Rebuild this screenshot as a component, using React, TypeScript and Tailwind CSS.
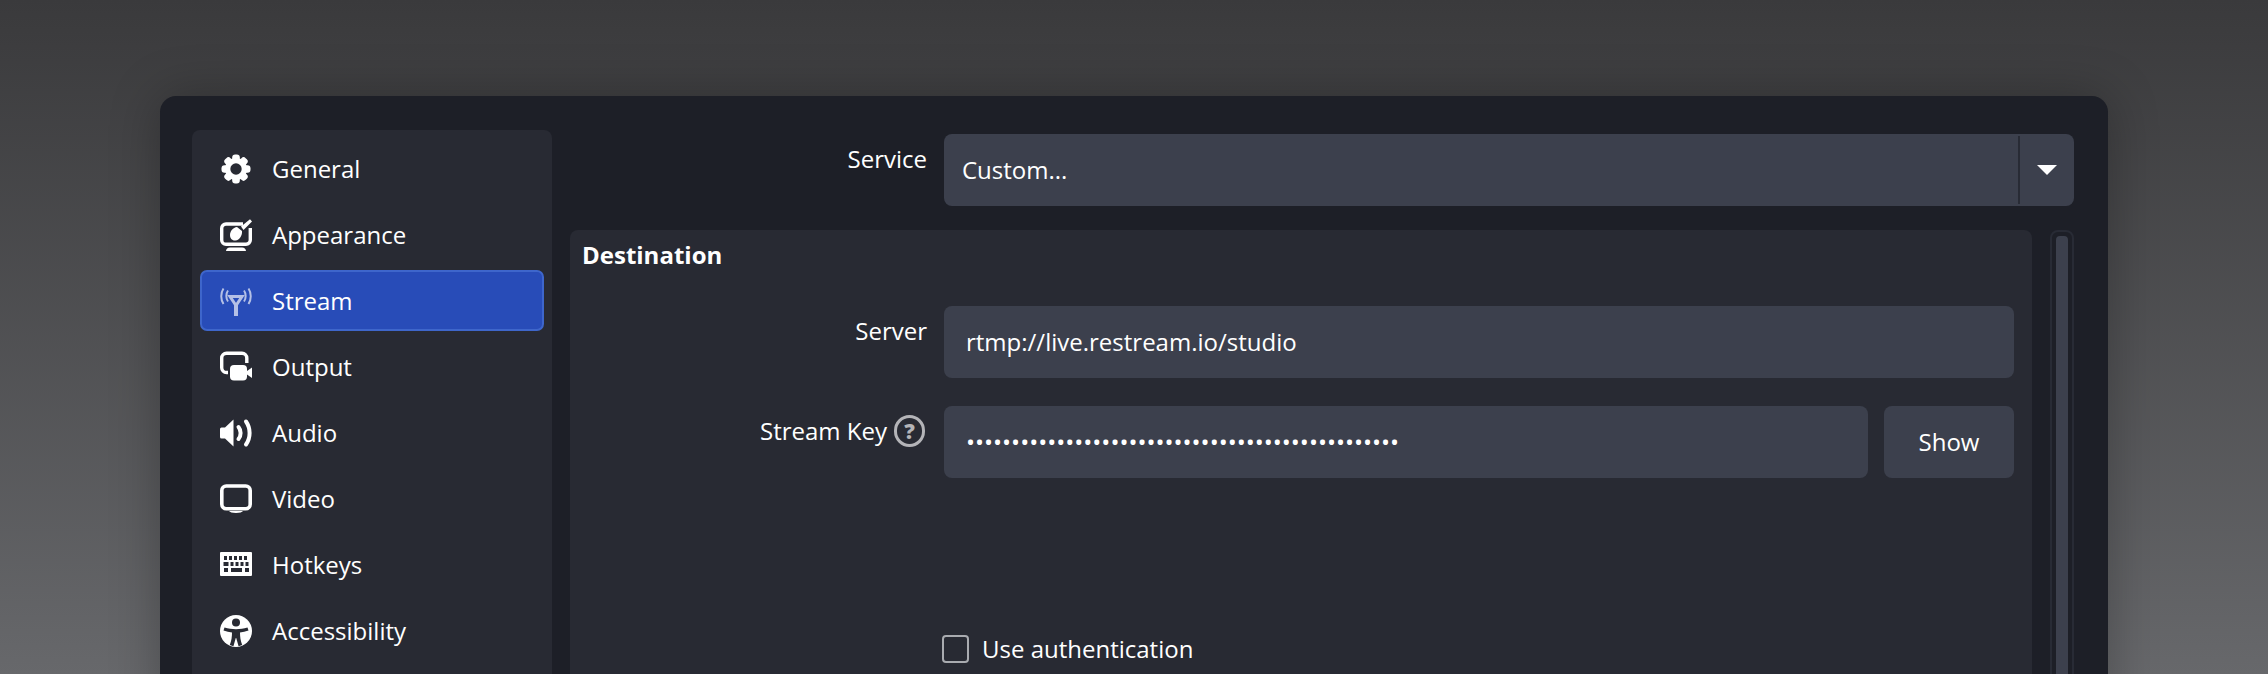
import React from 'react';

const ICON = 'w-8 h-8 text-white shrink-0';
const ICON_CUTOUT = '#282a33';

function GearIcon() {
  const angles = [0, 45, 90, 135, 180, 225, 270, 315];
  return (
    <svg viewBox="0 0 32 32" className={ICON} fill="currentColor">
      <circle cx="16" cy="16" r="11" />
      {angles.map(a => (
        <rect key={a} x="12.200" y="1.500" width="7.600" height="8" rx="3" transform={`rotate(${a} 16 16)`} />
      ))}
      <circle cx="16" cy="16" r="5.700" fill={ICON_CUTOUT} />
    </svg>
  );
}

function AppearanceIcon() {
  return (
    <svg viewBox="0 0 32 32" className={ICON} fill="none">
      <path d="M23 5H6A4.300 4.300 0 0 0 1.700 9.300V21A4.300 4.300 0 0 0 6 25.300H26A4.300 4.300 0 0 0 30.300 21V9" stroke="currentColor" strokeWidth="3.400" />
      <path d="M6 32c.3-2 1.500-3.500 4-3.500h12c2.500 0 3.700 1.500 4 3.500Z" fill="currentColor" />
      <path d="M10 16c0-4 3-7.500 7-8l5 4c.5 4.500-2.500 9-6.500 9.500-3.500.4-5.500-2.200-5.500-5.500Z" fill="currentColor" />
      <path d="M21 7.500 30 .2 32 2.500 23.500 11Z" fill="currentColor" />
    </svg>
  );
}

function StreamIcon() {
  return (
    <svg viewBox="0 0 32 32" className={`${ICON} opacity-65`} fill="none" stroke="currentColor">
      <path d="M10 11.500H22L16 20.500Z" strokeWidth="3" />
      <path d="M16 18V31" strokeWidth="4" />
      <path d="M8 5.500c-2.200 3-2.200 8 0 11" strokeWidth="2" />
      <path d="M3.500 3.500c-3 4.500-3 11 0 15.500" strokeWidth="2" />
      <path d="M24 5.500c2.200 3 2.200 8 0 11" strokeWidth="2" />
      <path d="M28.500 3.500c3 4.500 3 11 0 15.500" strokeWidth="2" />
    </svg>
  );
}

function OutputIcon() {
  return (
    <svg viewBox="0 0 32 32" className={ICON} fill="none">
      <path d="M8 21.500H6.500A4.800 4.800 0 0 1 1.700 16.700V7A4.800 4.800 0 0 1 6.500 2.200H22A4.800 4.800 0 0 1 26.800 7V12" stroke="currentColor" strokeWidth="3.400" />
      <rect x="10" y="14" width="17" height="15.500" rx="4" fill="currentColor" />
      <path d="M27 20 32 16.500V27L27 23.500Z" fill="currentColor" />
    </svg>
  );
}

function AudioIcon() {
  return (
    <svg viewBox="0 0 32 32" className={ICON} fill="none">
      <path d="M1.500 10.500H5L13.500 2.500V29.500L5 21.500H1.500A1.500 1.500 0 0 1 0 20V12A1.500 1.500 0 0 1 1.500 10.500Z" fill="currentColor" />
      <path d="M18.500 10c2.800 3.400 2.800 8.600 0 12" stroke="currentColor" strokeWidth="4" strokeLinecap="round" />
      <path d="M26 4.500c4.800 6.800 4.800 16.200 0 23" stroke="currentColor" strokeWidth="4" strokeLinecap="round" />
    </svg>
  );
}

function VideoIcon() {
  return (
    <svg viewBox="0 0 32 32" className={ICON} fill="none">
      <rect x="1.800" y="3" width="28.400" height="22.800" rx="4.500" stroke="currentColor" strokeWidth="3.600" />
      <path d="M9 28h14c-1 1.300-3 2-7 2s-6-.7-7-2Z" fill="currentColor" />
    </svg>
  );
}

function HotkeysIcon() {
  return (
    <svg viewBox="0 0 32 24" className="mb-[2px] h-6 w-8 shrink-0 text-white" fill="currentColor">
      <path
        fillRule="evenodd"
        d="M1 0h30a1 1 0 0 1 1 1v22a1 1 0 0 1-1 1H1a1 1 0 0 1-1-1V1a1 1 0 0 1 1-1ZM4 4v4h3V4Zm5 0v4h3V4Zm5 0v4h3V4Zm5 0v4h3V4Zm5 0v4h3V4ZM3.500 10v4h5v-4Zm7 0v4h3v-4Zm5 0v4h3v-4Zm5 0v4h3v-4Zm5 0v4h3v-4ZM4 16v4h4v-4Zm7 0v4h11v-4Zm14 0v4h4v-4Z"
      />
    </svg>
  );
}

function AccessibilityIcon() {
  return (
    <svg viewBox="0 0 32 32" className={ICON}>
      <circle cx="16" cy="16" r="16" fill="currentColor" />
      <circle cx="16" cy="7.500" r="4" fill={ICON_CUTOUT} />
      <path
        d="M4.500 12.500c3.800 1.100 7.500 1.700 11.500 1.700s7.700-.6 11.500-1.700l1 3c-2.900 1-5.800 1.600-8.500 1.900 0 4.200.5 8 2.200 12.600l-3.600 1.200L16.200 23h-.4l-2.400 8.200L9.800 30c1.700-4.600 2.200-8.400 2.200-12.600-2.700-.3-5.600-.9-8.500-1.900Z"
        fill={ICON_CUTOUT}
      />
    </svg>
  );
}

const NAV_ITEMS = [
  { label: 'General', icon: <GearIcon /> },
  { label: 'Appearance', icon: <AppearanceIcon /> },
  { label: 'Stream', icon: <StreamIcon />, active: true },
  { label: 'Output', icon: <OutputIcon /> },
  { label: 'Audio', icon: <AudioIcon /> },
  { label: 'Video', icon: <VideoIcon /> },
  { label: 'Hotkeys', icon: <HotkeysIcon /> },
  { label: 'Accessibility', icon: <AccessibilityIcon /> },
];

export default function App() {
  return (
    <div
      className="h-[674px] w-[2268px] overflow-hidden bg-gradient-to-b from-[#3a3a3c] to-[#67686b] pt-[96px] pl-[160px] text-[24px] font-[450] text-white"
      style={{ fontFamily: '"Open Sans", "Noto Sans", sans-serif' }}
    >
      <div className="flex h-[700px] w-[1948px] gap-[18px] rounded-t-[16px] bg-[#1d1f27] pt-[34px] pl-[32px] pr-[34px] shadow-[0_0_50px_rgba(0,0,0,0.28)]">
        {/* sidebar */}
        <nav className="flex h-[700px] w-[360px] shrink-0 flex-col gap-[5px] rounded-[8px] bg-[#282a33] px-[8px] pt-[8px]">
          {NAV_ITEMS.map(item => (
            <div
              key={item.label}
              className={
                item.active
                  ? 'flex h-[61px] items-center gap-[20px] rounded-[7px] border-2 border-[#3e66cb] bg-[#284cb8] pl-[18px]'
                  : 'flex h-[61px] items-center gap-[20px] rounded-[7px] border-2 border-transparent pl-[18px]'
              }
            >
              {item.icon}
              <span>{item.label}</span>
            </div>
          ))}
        </nav>

        <div className="flex min-w-0 flex-1 flex-col pt-[4px]">
          {/* service row */}
          <div className="flex h-[72px] shrink-0">
            <div className="w-[374px] shrink-0 pr-[17px] pt-[7px] text-right leading-[36px]">Service</div>
            <div className="flex h-[72px] flex-1 items-center rounded-[8px] bg-[#3c404d] pl-[18px]">
              <span className="flex-1">Custom...</span>
              <div className="flex h-[68px] w-[56px] items-center justify-center border-l-2 border-[#282b35]">
                <div className="h-0 w-0 border-x-[10px] border-t-[10px] border-x-transparent border-t-white" />
              </div>
            </div>
          </div>

          <div className="mt-[24px] flex min-h-0 flex-1 gap-[18px]">
            {/* destination group */}
            <section className="h-[500px] flex-1 rounded-[8px] bg-[#282a33] pl-[12px] pr-[18px]">
              <h2 className="pt-[7px] leading-[36px] font-bold">Destination</h2>

              <div className="mt-[33px] flex h-[72px]">
                <div className="w-[362px] shrink-0 pr-[17px] pt-[7px] text-right leading-[36px]">Server</div>
                <div className="flex flex-1 items-center rounded-[8px] bg-[#3c404d] pl-[22px]">rtmp://live.restream.io/studio</div>
              </div>

              <div className="mt-[28px] flex h-[72px]">
                <div className="flex w-[362px] shrink-0 justify-end gap-[7px] pr-[19px] pt-[7px] leading-[36px]">
                  <span>Stream Key</span>
                  <span className="mt-[2px] flex h-[32px] w-[31px] items-center justify-center rounded-full border-[3px] border-[#b4b4b8] text-[21px] leading-none font-extrabold text-[#b4b4b8]">?</span>
                </div>
                <div className="flex flex-1 items-center rounded-[8px] bg-[#3c404d] pl-[22px] leading-none">
                  {'•'.repeat(48)}
                </div>
                <div className="ml-[16px] flex w-[130px] items-center justify-center rounded-[8px] bg-[#3c404d]">Show</div>
              </div>

              <label className="mt-[153px] ml-[360px] flex items-center gap-[13px]">
                <span className="h-[28px] w-[27px] rounded-[4px] border-2 border-[#a9abb0]" />
                <span>Use authentication</span>
              </label>
            </section>

            {/* scrollbar */}
            <div className="h-[500px] w-[24px] shrink-0 rounded-[8px] border-2 border-[#282b35] p-[4px]">
              <div className="h-full w-full rounded-[4px] bg-[#3c404d]" />
            </div>
          </div>
        </div>
      </div>
    </div>
  );
}
